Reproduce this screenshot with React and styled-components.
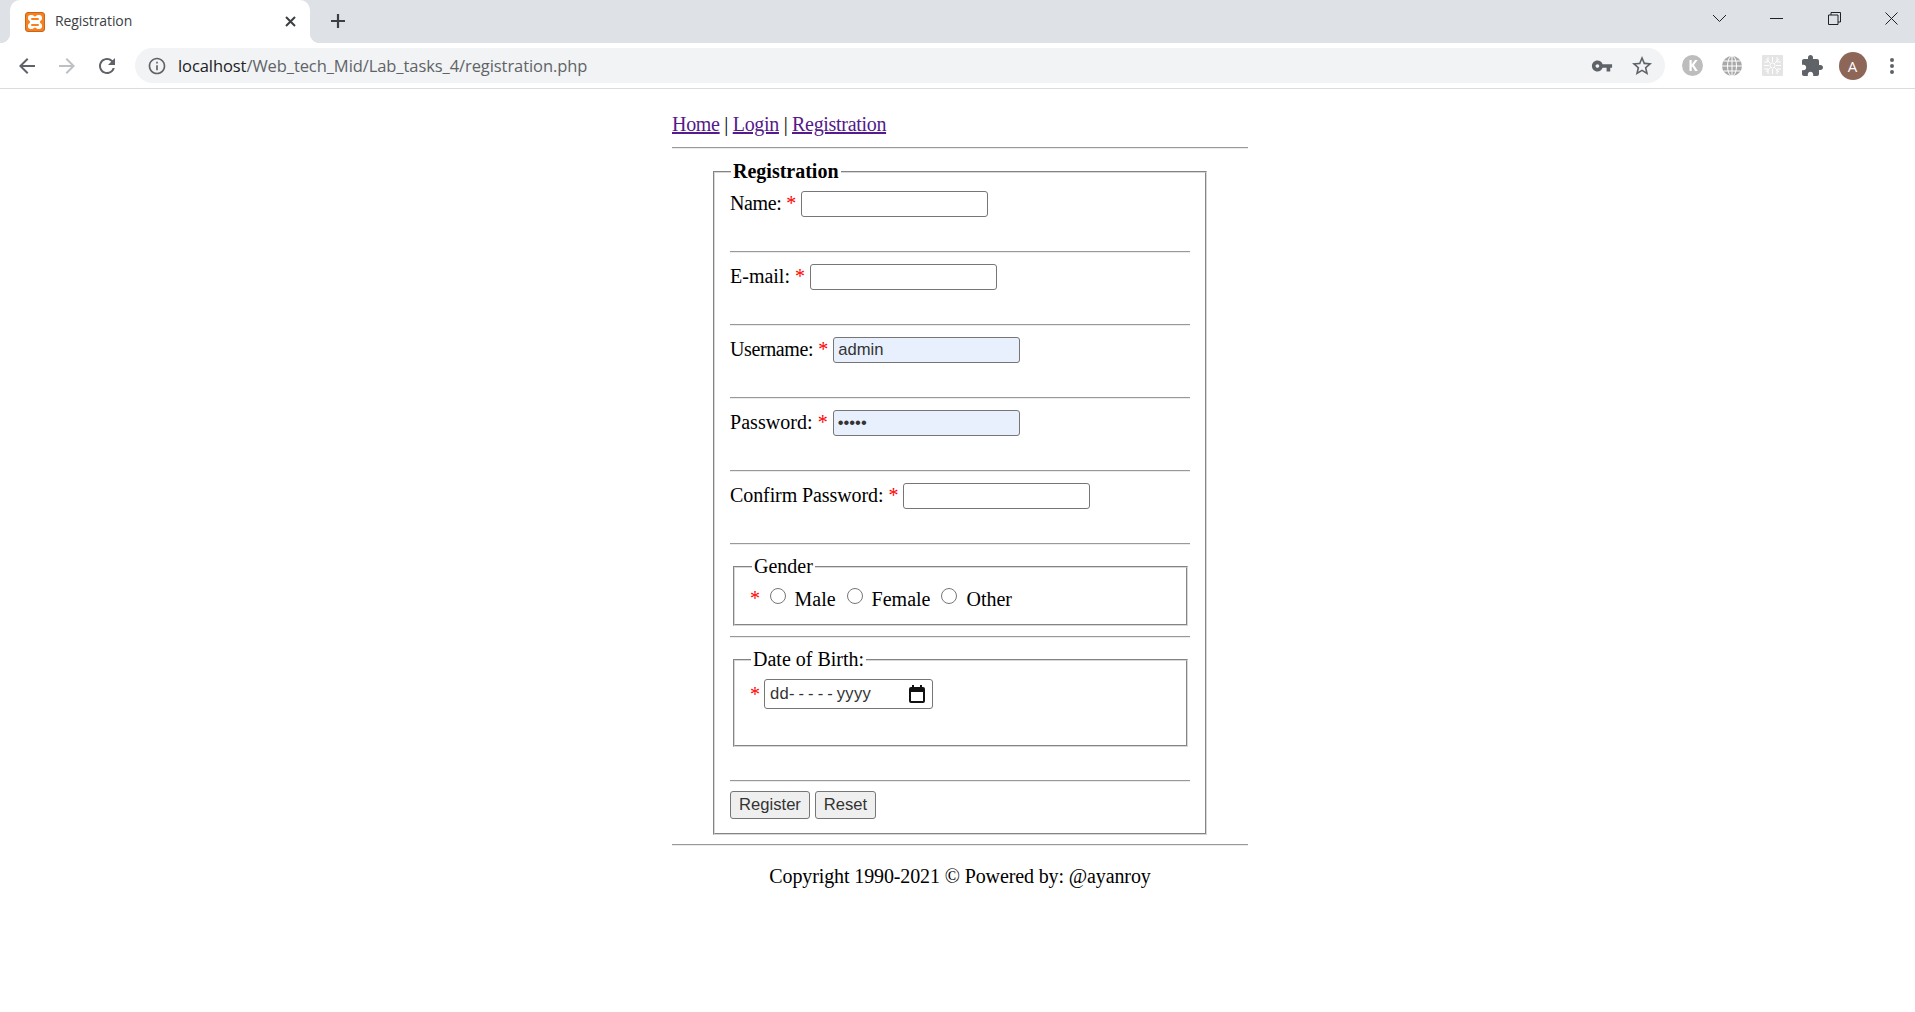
import React from 'react'
import styled, { createGlobalStyle } from 'styled-components'

const GlobalStyle = createGlobalStyle`
  html, body { margin: 0; padding: 0; background: #fff; }
  body { font-family: "Liberation Serif", "Times New Roman", serif; font-size: 20px; color: #000; overflow: hidden; }
`

const TabStrip = styled.div`
  display: flex;
  align-items: flex-start;
  height: 43px;
  background: #dee1e6;
`

const Tab = styled.div`
  position: relative;
  display: flex;
  align-items: center;
  width: 300px;
  height: 43px;
  margin-left: 10px;
  padding: 0 13px 0 15px;
  box-sizing: border-box;
  background: #fff;
  border-radius: 10px 10px 0 0;

  &::before, &::after {
    content: '';
    position: absolute;
    bottom: 0;
    width: 10px;
    height: 10px;
  }
  &::before { left: -10px; background: radial-gradient(circle at 0 0, transparent 10px, #fff 10.5px); }
  &::after { right: -10px; background: radial-gradient(circle at 100% 0, transparent 10px, #fff 10.5px); }
`

const TabTitle = styled.span`
  flex: 1;
  margin-left: 10px;
  padding-bottom: 2px;
  font-family: "Open Sans", sans-serif;
  font-size: 14px;
  letter-spacing: -0.1px;
  color: #3c4043;
`

const NewTab = styled.div`
  display: flex;
  margin: 11px 0 0 18px;
  color: #3c4043;
`

const WindowControls = styled.div`
  display: flex;
  align-items: center;
  gap: 44.5px;
  height: 37px;
  margin-left: auto;
  padding-right: 17px;
`

const Toolbar = styled.div`
  display: flex;
  align-items: flex-start;
  box-sizing: border-box;
  height: 46px;
  padding: 5px 3px 0 7px;
  background: #fff;
  border-bottom: 1px solid #dadce0;
`

const IconButton = styled.div`
  display: flex;
  align-items: center;
  justify-content: center;
  flex: none;
  width: 40px;
  height: 35px;
  color: ${p => p.$color || '#5f6368'};
`

const Omnibox = styled.div`
  display: flex;
  align-items: center;
  flex: 1;
  height: 35px;
  margin: 0 7px 0 8px;
  padding: 0 3px 0 12px;
  background: #f1f3f4;
  border-radius: 18px;
`

const Url = styled.div`
  flex: 1;
  margin-left: 11px;
  font-family: "Open Sans", sans-serif;
  font-size: 16.5px;
  letter-spacing: -0.08px;
  color: #5f6368;
  white-space: nowrap;
`

const Host = styled.span`
  color: #202124;
`

const Avatar = styled.div`
  display: flex;
  align-items: center;
  justify-content: center;
  width: 28px;
  height: 28px;
  margin-left: 1px;
  border-radius: 50%;
  background: #8d6658;
  color: #fff;
  font-family: "Open Sans", sans-serif;
  font-size: 15px;
`

const Content = styled.main`
  width: 576px;
  margin-left: 672px;
  padding-top: 23px;
`

const Nav = styled.nav`
  height: 24px;
  line-height: 24px;
  margin-bottom: 11px;
  letter-spacing: -0.31px;
`

const NavLink = styled.a`
  color: #551a8b;
  text-decoration: underline;
`

const Rule = styled.hr`
  display: block;
  height: 0;
  margin: ${p => p.$margin || '0'};
  border: 0;
  border-top: 1px solid #999;
  border-bottom: 1px solid #ececec;
`

const MainFieldset = styled.fieldset`
  width: 494px;
  box-sizing: border-box;
  margin: 11px 0 0 41px;
  padding: 8px 15px 14px 15px;
  border: 2px groove #d8d8d8;
  min-inline-size: 0;
`

const MainLegend = styled.legend`
  padding: 0 2px;
  margin-left: 1px;
  font-weight: bold;
  line-height: 23px;
`

const Row = styled.div`
  display: flex;
  align-items: flex-start;
  gap: 5px;
  height: 26px;
  margin-bottom: 34px;
  line-height: 25px;
`

const Label = styled.label`
  white-space: pre;
  letter-spacing: ${p => p.$spacing || '0'};
`

const Required = styled.span`
  color: #f00;
`

const TextInput = styled.input`
  box-sizing: border-box;
  width: 187px;
  height: 26px;
  margin: 0;
  padding: 0 4px;
  border: 1px solid #767676;
  border-radius: 3px;
  font-family: "Liberation Sans", Arial, sans-serif;
  font-size: 16.6px;
  color: #333;
  background: ${p => (p.$autofilled ? '#e8f0fe' : '#fff')};
  outline: none;
`

const InnerFieldset = styled.fieldset`
  width: 455px;
  box-sizing: border-box;
  height: ${p => p.$height};
  margin: ${p => p.$margin || '0'};
  padding: 8px 14px 0 15px;
  border: 2px groove #d8d8d8;
  min-inline-size: 0;
`

const InnerLegend = styled.legend`
  padding: 0 2px;
  margin-left: ${p => p.$indent || '2px'};
  line-height: 23px;
`

const RadioRow = styled.div`
  display: flex;
  align-items: center;
  height: 24px;
`

const Radio = styled.input.attrs({ type: 'radio' })`
  flex: none;
  width: 16px;
  height: 16px;
  margin: -4px 0 0 ${p => p.$gap};
`

const RadioLabel = styled.label`
  margin: 2px 0 0 9px;
  line-height: 24px;
`

const DateRow = styled.div`
  display: flex;
  align-items: center;
  gap: 4px;
`

const DateBox = styled.div`
  display: flex;
  align-items: center;
  justify-content: space-between;
  box-sizing: border-box;
  width: 169px;
  height: 30px;
  padding: 0 7px 0 5px;
  border: 1px solid #767676;
  border-radius: 3px;
  font-family: "Liberation Sans", Arial, sans-serif;
  font-size: 16.6px;
  letter-spacing: 0.3px;
  color: #333;
`

const Dashes = styled.span`
  letter-spacing: 4px;
`

const Buttons = styled.div`
  display: flex;
  gap: 5px;
  margin-top: 9px;
`

const Button = styled.button`
  box-sizing: border-box;
  height: 28px;
  width: ${p => p.$width};
  padding: 0;
  border: 1px solid #767676;
  border-radius: 3px;
  background: #efefef;
  font-family: "Liberation Sans", Arial, sans-serif;
  font-size: 16.6px;
  color: #333;
`

const Copyright = styled.p`
  margin: 18px 0 0;
  line-height: 24px;
  letter-spacing: -0.12px;
  text-align: center;
`

const Svg = ({ size = 24, children }) => (
  <svg width={size} height={size} viewBox="0 0 24 24" fill="currentColor">{children}</svg>
)

const XamppIcon = () => (
  <svg width="20" height="20" viewBox="0 0 20 20">
    <rect x=".5" y=".5" width="19" height="19" rx="2.5" fill="#f7801f" stroke="#c9641a" />
    <path d="M5.500 3h1.800c1.100 0 1.500 1.500 2.700 1.500S11.600 3 12.700 3h1.800c1.500 0 2.500 1 2.500 2.400v1.400c0 1.500-2.200 2.200-2.200 3.200s2.200 1.700 2.200 3.200v1.400c0 1.400-1 2.400-2.500 2.400h-1.800c-1.100 0-1.500-1.500-2.700-1.500S8.400 17 7.300 17H5.500C4 17 3 16 3 14.600v-1.400c0-1.500 2.200-2.200 2.200-3.200S3 8.300 3 6.800V5.400C3 4 4 3 5.500 3z" fill="#fff" />
    <rect x="6" y="6" width="8" height="2" rx="1" fill="#f7801f" />
    <rect x="6" y="12" width="8" height="2" rx="1" fill="#f7801f" />
  </svg>
)

const GlobeIcon = () => (
  <svg width="20" height="20" viewBox="0 0 20 20" fill="none" stroke="#fff" strokeWidth="1">
    <circle cx="10" cy="10" r="10" fill="#a8a8a8" stroke="none" />
    <ellipse cx="10" cy="10" rx="4.500" ry="10" />
    <path d="M10 0v20M0 10h20M1.500 5h17M1.500 15h17" />
  </svg>
)

const KIcon = () => (
  <svg width="21" height="21" viewBox="0 0 21 21">
    <circle cx="10.500" cy="10.500" r="10.500" fill="#bdbdbd" />
    <path d="M7.500 5h2.200v4.600L13 5h2.600l-3.600 4.900L15.800 16h-2.700l-2.700-4.600-.7.900V16H7.500z" fill="#fff" />
  </svg>
)

const PatternIcon = () => (
  <svg width="21" height="21" viewBox="0 0 21 21" fill="none" stroke="#fff" strokeWidth="1">
    <rect width="21" height="21" rx="1" fill="#e4e4e4" stroke="none" />
    <circle cx="10.500" cy="10.500" r="2.500" />
    <path d="M2 10.500h5M14 10.500h5M10.500 2v5M10.500 14v5M4 4l4.500 4.500M17 4l-4.500 4.500M4 17l4.500-4.500M17 17l-4.500-4.500M6 2v5H2M15 2v5h4M6 19v-5H2M15 19v-5h4" />
  </svg>
)

const InfoIcon = () => (
  <svg width="20" height="20" viewBox="0 0 24 24" fill="#5f6368">
    <path d="M11 7h2v2h-2zm0 4h2v6h-2zm1-9C6.480 2 2 6.480 2 12s4.480 10 10 10 10-4.480 10-10S17.520 2 12 2zm0 18c-4.410 0-8-3.590-8-8s3.590-8 8-8 8 3.590 8 8-3.590 8-8 8z" />
  </svg>
)

export default function App() {
  return (
    <>
      <GlobalStyle />
      <TabStrip>
        <Tab>
          <XamppIcon />
          <TabTitle>Registration</TabTitle>
          <svg width="13" height="13" viewBox="0 0 13 13" stroke="#3c4043" strokeWidth="2" fill="none">
            <path d="M2 2l9 9M11 2l-9 9" />
          </svg>
        </Tab>
        <NewTab>
          <svg width="20" height="20" viewBox="0 0 20 20" stroke="currentColor" strokeWidth="2.200" fill="none">
            <path d="M10 3v14M3 10h14" />
          </svg>
        </NewTab>
        <WindowControls>
          <svg width="13" height="13" viewBox="0 0 13 13" stroke="#202124" strokeWidth="1" fill="none">
            <path d="M0 3l6.500 6.500L13 3" />
          </svg>
          <svg width="13" height="13" viewBox="0 0 13 13" stroke="#202124" strokeWidth="1" fill="none">
            <path d="M0 6.500h13" />
          </svg>
          <svg width="13" height="13" viewBox="0 0 13 13" stroke="#202124" strokeWidth="1" fill="none">
            <path d="M.5 3h9.500v9.500H.5zM3 3V.5h9.500V10H10" />
          </svg>
          <svg width="13" height="13" viewBox="0 0 13 13" stroke="#202124" strokeWidth="1" fill="none">
            <path d="M.5.500l12 12M12.500.500l-12 12" />
          </svg>
        </WindowControls>
      </TabStrip>

      <Toolbar>
        <IconButton>
          <Svg><path d="M20 11H7.830l5.590-5.590L12 4l-8 8 8 8 1.410-1.410L7.830 13H20v-2z" /></Svg>
        </IconButton>
        <IconButton $color="#bdc1c6">
          <Svg><path d="M12 4l-1.410 1.410L16.170 11H4v2h12.170l-5.580 5.590L12 20l8-8z" /></Svg>
        </IconButton>
        <IconButton>
          <Svg><path d="M17.650 6.350A7.958 7.958 0 0 0 12 4c-4.420 0-7.990 3.580-7.990 8s3.570 8 7.990 8c3.730 0 6.840-2.550 7.730-6h-2.080A5.990 5.990 0 0 1 12 18c-3.310 0-6-2.690-6-6s2.690-6 6-6c1.660 0 3.140.69 4.220 1.780L13 11h7V4l-2.350 2.350z" /></Svg>
        </IconButton>
        <Omnibox>
          <InfoIcon />
          <Url><Host>localhost</Host>/Web_tech_Mid/Lab_tasks_4/registration.php</Url>
          <IconButton>
            <Svg size={22}><path d="M12.650 10A5.990 5.990 0 0 0 7 6c-3.310 0-6 2.690-6 6s2.690 6 6 6a5.990 5.990 0 0 0 5.650-4H17v4h4v-4h2v-4H12.650zM7 14c-1.100 0-2-.9-2-2s.9-2 2-2 2 .9 2 2-.9 2-2 2z" /></Svg>
          </IconButton>
          <IconButton>
            <Svg><path d="M22 9.240l-7.190-.62L12 2 9.190 8.630 2 9.240l5.460 4.730L5.820 21 12 17.270 18.180 21l-1.630-7.030L22 9.240zM12 15.400l-3.760 2.270 1-4.280-3.320-2.880 4.380-.38L12 6.100l1.710 4.040 4.380.38-3.320 2.880 1 4.280L12 15.400z" /></Svg>
          </IconButton>
        </Omnibox>
        <IconButton><KIcon /></IconButton>
        <IconButton><GlobeIcon /></IconButton>
        <IconButton><PatternIcon /></IconButton>
        <IconButton>
          <Svg><path d="M20.500 11H19V7c0-1.100-.9-2-2-2h-4V3.500C13 2.120 11.880 1 10.500 1S8 2.120 8 3.500V5H4c-1.100 0-1.990.9-1.990 2v3.800H3.500c1.490 0 2.700 1.210 2.700 2.700s-1.210 2.700-2.700 2.700H2V20c0 1.100.9 2 2 2h3.800v-1.500c0-1.490 1.210-2.700 2.700-2.700 1.490 0 2.700 1.210 2.700 2.700V22H17c1.100 0 2-.9 2-2v-4h1.500c1.380 0 2.500-1.120 2.500-2.500S21.880 11 20.500 11z" /></Svg>
        </IconButton>
        <IconButton><Avatar>A</Avatar></IconButton>
        <IconButton>
          <Svg><path d="M12 8a2 2 0 1 0 0-4 2 2 0 0 0 0 4zm0 2a2 2 0 1 0 0 4 2 2 0 0 0 0-4zm0 6a2 2 0 1 0 0 4 2 2 0 0 0 0-4z" /></Svg>
        </IconButton>
      </Toolbar>

      <Content>
        <Nav>
          <NavLink href="#">Home</NavLink> | <NavLink href="#">Login</NavLink> | <NavLink href="#">Registration</NavLink>
        </Nav>
        <Rule />
        <MainFieldset>
          <MainLegend>Registration</MainLegend>
          <Row>
            <Label $spacing="-0.4px">Name:</Label>
            <Required>*</Required>
            <TextInput />
          </Row>
          <Rule $margin="0 0 11px" />
          <Row>
            <Label>E-mail:</Label>
            <Required>*</Required>
            <TextInput />
          </Row>
          <Rule $margin="0 0 11px" />
          <Row>
            <Label $spacing="-0.38px">Username:</Label>
            <Required>*</Required>
            <TextInput $autofilled defaultValue="admin" />
          </Row>
          <Rule $margin="0 0 11px" />
          <Row>
            <Label $spacing="0.05px">Password:</Label>
            <Required>*</Required>
            <TextInput $autofilled type="password" defaultValue="admin" />
          </Row>
          <Rule $margin="0 0 11px" />
          <Row>
            <Label $spacing="-0.09px">Confirm Password:</Label>
            <Required>*</Required>
            <TextInput />
          </Row>
          <Rule />
          <InnerFieldset $height="71px" $margin="10px 0 0 3px">
            <InnerLegend>Gender</InnerLegend>
            <RadioRow>
              <Required>*</Required>
              <Radio name="gender" $gap="9.5px" />
              <RadioLabel>Male</RadioLabel>
              <Radio name="gender" $gap="11px" />
              <RadioLabel>Female</RadioLabel>
              <Radio name="gender" $gap="11px" />
              <RadioLabel>Other</RadioLabel>
            </RadioRow>
          </InnerFieldset>
          <Rule $margin="10px 0 0" />
          <InnerFieldset $height="99px" $margin="10px 0 0 3px">
            <InnerLegend $indent="1px">Date of Birth:</InnerLegend>
            <DateRow>
              <Required>*</Required>
              <DateBox>
                <span>dd<Dashes>-----</Dashes>yyyy</span>
                <svg width="16" height="18" viewBox="0 0 16 18" fill="#111">
                  <path d="M3 0h2v2h6V0h2v2h1a2 2 0 0 1 2 2v12a2 2 0 0 1-2 2H2a2 2 0 0 1-2-2V4a2 2 0 0 1 2-2h1zM2 7v9h12V7z" />
                </svg>
              </DateBox>
            </DateRow>
          </InnerFieldset>
          <Rule $margin="33px 0 0" />
          <Buttons>
            <Button $width="80px">Register</Button>
            <Button $width="61px">Reset</Button>
          </Buttons>
        </MainFieldset>
        <Rule $margin="9px 0 0" />
        <Copyright>Copyright 1990-2021 © Powered by: @ayanroy</Copyright>
      </Content>
    </>
  )
}
